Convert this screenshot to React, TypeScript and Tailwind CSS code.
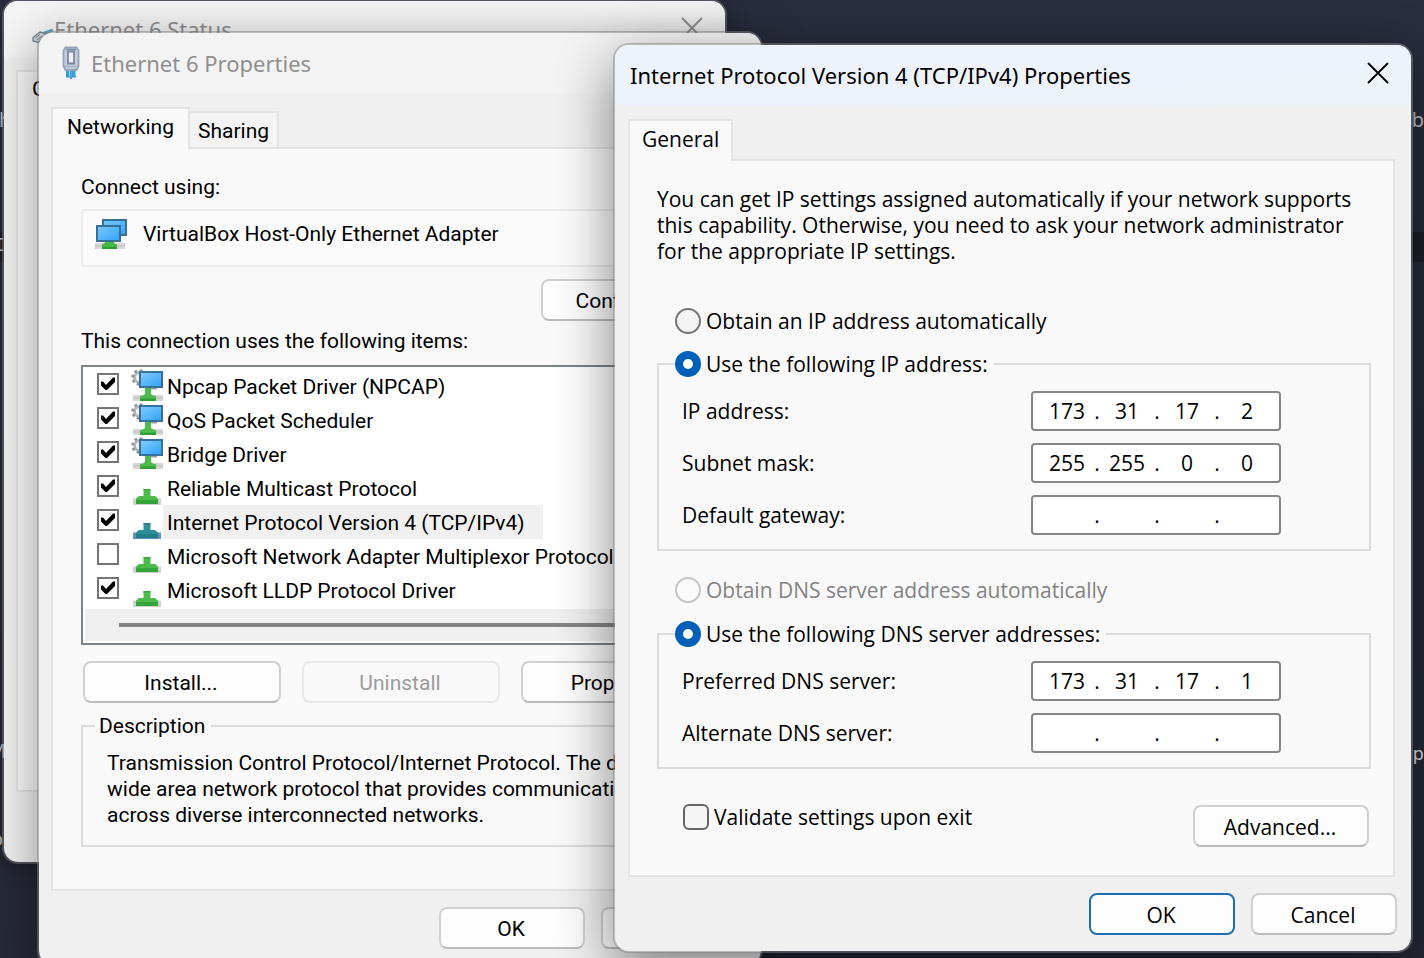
import { useId, useState, type ReactNode } from "react";

const titleFont = "font-['Noto_Sans','Open_Sans',sans-serif]";
const tahomaFont = "font-['Open_Sans','Noto_Sans',sans-serif]";
const sansFont = "font-[Roboto,'Liberation_Sans',sans-serif]";

/* ---------- icons ---------- */

function CloseIcon() {
  return (
    <svg width="22" height="22" viewBox="0 0 22 22" fill="none" stroke="currentColor" strokeWidth="1.8" strokeLinecap="round">
      <path d="M1.5 1.5 20.5 20.5M20.5 1.5 1.5 20.5" />
    </svg>
  );
}

function CableIcon() {
  return (
    <svg width="20" height="34" viewBox="0 0 20 34">
      <path d="M7 22v9.500M13 22v9.500" stroke="#2b9fd2" strokeWidth="4" />
      <path d="M8.500 22v8M14.500 22v8" stroke="#8fd3ee" strokeWidth="1.200" />
      <path d="M10 23v10" stroke="#1f86bb" strokeWidth="1.500" />
      <path d="M4.500 1.500h11l2 3V20L15.500 24H4.500l-2-4V4.500z" fill="#c3cddd" stroke="#95a3ba" strokeWidth="1.800" />
      <path d="M5 3.500h10" stroke="#7c8aa2" strokeWidth="1.500" />
      <path d="M7 5.500h6v12H7z" fill="#eef2f8" stroke="#7b889f" strokeWidth="1.800" />
      <path d="M3.500 20.500h13" stroke="#aab6c8" strokeWidth="1.500" />
    </svg>
  );
}

function PlugIcon() {
  return (
    <svg width="22" height="16" viewBox="0 0 22 16">
      <path d="M11 4.500 21 1" stroke="#5fa6c8" strokeWidth="3" />
      <path d="M1 8.500 8 3l6 1.500-1 3.500-6.500 5.500L1 12z" fill="#cfd6dd" stroke="#77818c" strokeWidth="1.300" />
      <path d="m3.500 9 4.500-3.500M5 11l5-4" stroke="#77818c" strokeWidth="1" />
    </svg>
  );
}

function AdapterIcon() {
  return (
    <svg width="34" height="32" viewBox="0 0 34 32">
      <defs>
        <linearGradient id="adapter-screen" x1="0" y1="0" x2="1" y2="1">
          <stop offset="0" stopColor="#7cc8ff" />
          <stop offset="1" stopColor="#2fa4f7" />
        </linearGradient>
      </defs>
      <rect x="9" y="2" width="23" height="15" fill="url(#adapter-screen)" stroke="#3a6f93" strokeWidth="2" />
      <path d="M1 25h30v6H1z" fill="#d9d9d9" />
      <path d="M1 28h30" stroke="#b9b9b9" strokeWidth="1" />
      <rect x="3" y="8" width="23" height="15" fill="url(#adapter-screen)" stroke="#3a6f93" strokeWidth="2" />
      <path d="M11 24h9l1 2h2v5H8v-5h2z" fill="#46b848" />
      <path d="M8 29h15v2H8z" fill="#2f9c33" />
    </svg>
  );
}

function ServiceIcon() {
  return (
    <svg width="32" height="32" viewBox="0 0 32 32">
      <defs>
        <linearGradient id="service-screen" x1="0" y1="0" x2="1" y2="1">
          <stop offset="0" stopColor="#86ccff" />
          <stop offset="1" stopColor="#2da2f6" />
        </linearGradient>
      </defs>
      <circle cx="8.500" cy="8.500" r="5" fill="#f4f4f4" stroke="#b4b7ba" strokeWidth="3" />
      <circle cx="8.500" cy="8.500" r="7" fill="none" stroke="#8b8f94" strokeWidth="2.500" strokeDasharray="2.750 2.750" />
      <path d="M14 18h6v2h-6zM19 19h7v1.500h-7z" fill="#9aa0a6" />
      <rect x="9" y="3" width="22" height="15" fill="url(#service-screen)" stroke="#35719c" strokeWidth="2" />
      <path d="M2 26h30v6H2z" fill="#d6d6d6" />
      <path d="M2 29h30" stroke="#bcbcbc" />
      <path d="M14 19h6v6l3 2h2v5H9v-5h2l3-2z" fill="#4dbb4d" />
      <path d="M9 29.500h16V32H9z" fill="#2f9f35" />
    </svg>
  );
}

function ProtocolIcon({ selected = false }: { selected?: boolean }) {
  return (
    <svg width="32" height="34" viewBox="0 0 32 34">
      <path d="M2 27.500h28V34H2z" fill={selected ? "#5b93bd" : "#d0d0d0"} />
      <path d="M12.500 18h7v7h4.500L27 27.500V31H5v-3.500L8 25h4.500z" fill={selected ? "#2f8f97" : "#4cbb4c"} />
      <path d="M5 29h22v4H5z" fill={selected ? "#237d88" : "#33a33a"} />
      <path d="M12.500 18h7v1.500h-7z" fill={selected ? "#277f89" : "#3aa83f"} />
    </svg>
  );
}

/* ---------- window parts ---------- */

function Window({ title, label, className, children }: { title: ReactNode; label: string; className: string; children: ReactNode }) {
  return (
    <section
      role="dialog"
      aria-label={label}
      className={`absolute overflow-hidden rounded-2xl border-2 border-[#808080]/50 bg-[#f0f0f0] bg-clip-padding ${className}`}
    >
      {title}
      {children}
    </section>
  );
}

function Tab({ active = false, className, children }: { active?: boolean; className: string; children: ReactNode }) {
  return active ? (
    <button type="button" role="tab" aria-selected="true" className={`relative -mb-0.5 h-[42px] border-2 border-b-0 border-[#e4e4e4] bg-[#f9f9f9] pb-1 ${className}`}>
      {children}
    </button>
  ) : (
    <button type="button" role="tab" aria-selected="false" className={`h-[36px] border-2 border-b-0 border-l-0 border-[#e4e4e4] bg-[#f3f3f3] pt-0.5 ${className}`}>
      {children}
    </button>
  );
}

function Button({ className, children, disabled, primary }: { className: string; children: ReactNode; disabled?: boolean; primary?: boolean }) {
  const tone = primary
    ? "border-[#1f6fb0] bg-[#fdfdfd]"
    : disabled
      ? "border-[#e9e9e9] bg-[#f9f9f9] text-[#9c9c9c]"
      : "border-[#d0d0d0] border-b-[#bcbcbc] bg-[#fdfdfd]";
  return (
    <button type="button" disabled={disabled} className={`h-[42px] shrink-0 rounded-lg border-2 pt-0.5 pr-0.5 ${tone} ${className}`}>
      {children}
    </button>
  );
}

function Radio({ name, label, checked, disabled, onSelect }: { name: string; label: string; checked: boolean; disabled?: boolean; onSelect?: () => void }) {
  return (
    <label className={`flex h-[26px] items-center gap-[5px] ${disabled ? "text-[#838383]" : ""}`}>
      <input
        type="radio"
        name={name}
        checked={checked}
        disabled={disabled}
        onChange={() => onSelect?.()}
        className="size-[26px] appearance-none rounded-full border-2 border-[#777777] bg-[#f3f3f3] checked:border-8 checked:border-[#005fb8] checked:bg-white disabled:border-[#c4c4c4] disabled:bg-[#fafafa]"
      />
      {label}
    </label>
  );
}

function AddressField({ label, value }: { label: string; value: string[] }) {
  const id = useId();
  const [parts, setParts] = useState(value);
  return (
    <div className="flex h-10 items-center justify-between">
      <label htmlFor={id}>{label}</label>
      <div role="group" aria-label={label} className="flex h-10 w-[250px] items-center rounded-sm border-2 border-[#868686] bg-white pl-[7px]">
        {parts.map((part, i) => (
          <div key={i} className="flex items-center">
            <input
              id={i === 0 ? id : undefined}
              aria-label={i === 0 ? undefined : `${label} part ${i + 1}`}
              value={part}
              maxLength={3}
              onChange={(e) => setParts(parts.map((p, j) => (j === i ? e.target.value : p)))}
              className="w-[54px] bg-transparent text-center outline-none"
            />
            {i < 3 && <span className="w-1.5 text-center">.</span>}
          </div>
        ))}
      </div>
    </div>
  );
}

type Item = { name: string; icon: "service" | "protocol"; checked: boolean; selected?: boolean };

const items: Item[] = [
  { name: "Npcap Packet Driver (NPCAP)", icon: "service", checked: true },
  { name: "QoS Packet Scheduler", icon: "service", checked: true },
  { name: "Bridge Driver", icon: "service", checked: true },
  { name: "Reliable Multicast Protocol", icon: "protocol", checked: true },
  { name: "Internet Protocol Version 4 (TCP/IPv4)", icon: "protocol", checked: true, selected: true },
  { name: "Microsoft Network Adapter Multiplexor Protocol", icon: "protocol", checked: false },
  { name: "Microsoft LLDP Protocol Driver", icon: "protocol", checked: true },
];

function ItemRow({ item }: { item: Item }) {
  const [checked, setChecked] = useState(item.checked);
  return (
    <li>
      <label className="flex h-[34px] items-start pl-3 whitespace-nowrap">
        <span className="mt-1 grid">
          <input
            type="checkbox"
            checked={checked}
            onChange={(e) => setChecked(e.target.checked)}
            className="col-start-1 row-start-1 size-[22px] appearance-none border-2 border-[#757575] bg-white"
          />
          {checked && (
            <svg className="pointer-events-none col-start-1 row-start-1" width="22" height="22" viewBox="0 0 22 22">
              <path d="M4 8.500h2l3 3.500 7-7.500h2V9l-8 8H8.500L4 12.500z" fill="#000" />
            </svg>
          )}
        </span>
        <span className="ml-3">{item.icon === "service" ? <ServiceIcon /> : <ProtocolIcon selected={item.selected} />}</span>
        <span className={`h-[34px] pr-[18px] pl-1 leading-[36px] ${item.selected ? "bg-[#f0f0f0]" : ""}`}>{item.name}</span>
      </label>
    </li>
  );
}

/* ---------- windows ---------- */

function StatusWindow() {
  return (
    <Window
      label="Ethernet 6 Status"
      className={`-top-px left-[2px] w-[725px] text-[21px] shadow-[0_4px_20px_rgba(0,0,0,0.3)] ${sansFont}`}
      title={
        <header className={`flex h-[56px] items-center bg-[#f4f4f4] pr-[22px] pl-7 text-[22px] text-[#8f8f8f] ${titleFont}`}>
          <span className="mt-4"><PlugIcon /></span>
          <h2 className="flex-1">Ethernet 6 Status</h2>
          <button type="button" aria-label="Close Status" className="pb-0.5"><CloseIcon /></button>
        </header>
      }
    >
      <div className="px-3 pt-[13px] pb-[70px]">
        <div role="tablist" className="flex items-end">
          <Tab active className="px-[14px]">General</Tab>
        </div>
        <div className="h-[682px] border-2 border-[#e4e4e4] bg-[#f9f9f9]" />
      </div>
    </Window>
  );
}

function AdapterWindow() {
  return (
    <Window
      label="Ethernet 6 Properties"
      className={`top-[31px] left-[37px] w-[726px] text-[21px] leading-[26px] shadow-[0_12px_48px_rgba(0,0,0,0.4)] ${sansFont}`}
      title={
        <header className={`flex h-[60px] items-center gap-[10px] bg-[#f3f3f3] pl-[22px] text-[22px] text-[#8f8f8f] ${titleFont}`}>
          <CableIcon />
          <h2>Ethernet 6 Properties</h2>
        </header>
      }
    >
      <div className="pt-[14px] pr-[14px] pb-4 pl-3">
        <div role="tablist" className="flex items-end">
          <Tab active className="px-[14px]">Networking</Tab>
          <Tab className="px-2">Sharing</Tab>
        </div>
        <div className="flex flex-col border-2 border-[#e4e4e4] bg-[#f9f9f9] pt-[25px] pr-6 pb-[42px] pl-7">
          <p>Connect using:</p>
          <div className="mt-[9px] flex h-[58px] items-center gap-[15px] rounded-sm border-2 border-[#ececec] bg-[#fbfbfb] pb-2 pl-[11px]">
            <AdapterIcon />
            VirtualBox Host-Only Ethernet Adapter
          </div>
          <Button className="mt-3 mr-0.5 w-[178px] self-end">Configure...</Button>
          <p className="mt-[7px]">This connection uses the following items:</p>
          <div className="mt-[11px] border-2 border-[#7c828a] bg-white p-0.5">
            <ul>
              {items.map((item) => (
                <ItemRow key={item.name} item={item} />
              ))}
            </ul>
            <div className="mt-0.5 flex h-8 items-center bg-[#f0f0f0] px-[34px]">
              <div className="h-1 flex-1 bg-[#858585]" />
            </div>
          </div>
          <div className="mt-4 flex justify-between px-0.5">
            <Button className="w-[198px]">Install...</Button>
            <Button className="w-[198px]" disabled>Uninstall</Button>
            <Button className="w-[198px]">Properties</Button>
          </div>
          <fieldset className="mt-[10px] border-2 border-[#dcdcdc] pb-[17px]">
            <legend className="ml-3 pr-1.5 pl-1">Description</legend>
            <p className="pt-[11px] pl-6 whitespace-nowrap">
              Transmission Control Protocol/Internet Protocol. The default
              <br />
              wide area network protocol that provides communication
              <br />
              across diverse interconnected networks.
            </p>
          </fieldset>
        </div>
        <div className="mt-4 flex justify-end gap-4">
          <Button className="w-[146px]">OK</Button>
          <Button className="w-[146px]">Cancel</Button>
        </div>
      </div>
    </Window>
  );
}

function Ipv4Window() {
  const [ipMode, setIpMode] = useState("manual");
  return (
    <Window
      label="Internet Protocol Version 4 (TCP/IPv4) Properties"
      className={`top-[43px] left-[613px] w-[800px] text-[21px] leading-[26px] shadow-[0_18px_56px_rgba(0,0,0,0.48)] ${tahomaFont}`}
      title={
        <header className={`flex h-[60px] items-center justify-between bg-linear-to-br from-[#eef3fb] via-[#eef3fb] to-[#ebf3f7] pr-[22px] pl-[15px] text-[22px] ${titleFont}`}>
          <h1>Internet Protocol Version 4 (TCP/IPv4) Properties</h1>
          <button type="button" aria-label="Close" className="pb-1"><CloseIcon /></button>
        </header>
      }
    >
      <div className="pt-[14px] pr-[14px] pb-4 pl-[13px]">
        <div role="tablist" className="flex items-end">
          <Tab active className="px-3">General</Tab>
        </div>
        <div className="mr-0.5 border-2 border-[#e4e4e4] bg-[#f9f9f9] pt-[25px] pr-[22px] pb-7 pl-[27px]">
          <p className="whitespace-nowrap">
            You can get IP settings assigned automatically if your network supports
            <br />
            this capability. Otherwise, you need to ask your network administrator
            <br />
            for the appropriate IP settings.
          </p>
          <div className="mt-11 ml-[18px]">
            <Radio name="ip" label="Obtain an IP address automatically" checked={ipMode === "auto"} onSelect={() => setIpMode("auto")} />
          </div>
          <fieldset className="mt-[17px] border-2 border-[#dcdcdc]">
            <legend className="ml-4 pr-1.5">
              <Radio name="ip" label="Use the following IP address:" checked={ipMode === "manual"} onSelect={() => setIpMode("manual")} />
            </legend>
            <div className="flex flex-col gap-3 pt-[14px] pr-[88px] pb-[14px] pl-[23px]">
              <AddressField label="IP address:" value={["173", "31", "17", "2"]} />
              <AddressField label="Subnet mask:" value={["255", "255", "0", "0"]} />
              <AddressField label="Default gateway:" value={["", "", "", ""]} />
            </div>
          </fieldset>
          <div className="mt-[26px] ml-[18px]">
            <Radio name="dns" label="Obtain DNS server address automatically" checked={false} disabled />
          </div>
          <fieldset className="mt-[18px] border-2 border-[#dcdcdc]">
            <legend className="ml-4 pr-1.5">
              <Radio name="dns" label="Use the following DNS server addresses:" checked />
            </legend>
            <div className="flex flex-col gap-3 pt-[14px] pr-[88px] pb-[14px] pl-[23px]">
              <AddressField label="Preferred DNS server:" value={["173", "31", "17", "1"]} />
              <AddressField label="Alternate DNS server:" value={["", "", "", ""]} />
            </div>
          </fieldset>
          <div className="mt-9 flex items-start justify-between pr-0.5 pl-[26px]">
            <label className="flex h-6 items-center gap-[5px]">
              <input type="checkbox" className="size-[26px] appearance-none rounded-md border-2 border-[#666666] bg-[#f5f5f5] checked:bg-[#005fb8]" />
              Validate settings upon exit
            </label>
            <Button className="w-[176px]">Advanced...</Button>
          </div>
        </div>
        <div className="mt-4 flex justify-end gap-4">
          <Button className="w-[146px]" primary>OK</Button>
          <Button className="w-[146px]">Cancel</Button>
        </div>
      </div>
    </Window>
  );
}

export default function App() {
  return (
    <main className="relative h-screen overflow-hidden bg-linear-to-b from-[#2a2d3e] via-[#272a39] to-[#262937] text-black">
      <div className={`text-xl text-[#c4c6cc] ${titleFont}`}>
        <span className="absolute top-[106px] -left-px">h</span>
        <span className="absolute top-[106px] right-0">b</span>
        <div className="absolute top-[232px] right-0 left-0 h-[30px] bg-[#1e1f2a]">
          <span className="absolute -left-[7px] font-['Liberation_Mono',monospace]">I</span>
        </div>
        <span className="absolute top-[737px] -left-[12px]">M</span>
        <span className="absolute top-[825px] -left-[9px]">o</span>
        <span className="absolute top-[739px] -right-[10px] text-lg text-[#e4e5e8]">pe</span>
      </div>
      <StatusWindow />
      <AdapterWindow />
      <Ipv4Window />
    </main>
  );
}
